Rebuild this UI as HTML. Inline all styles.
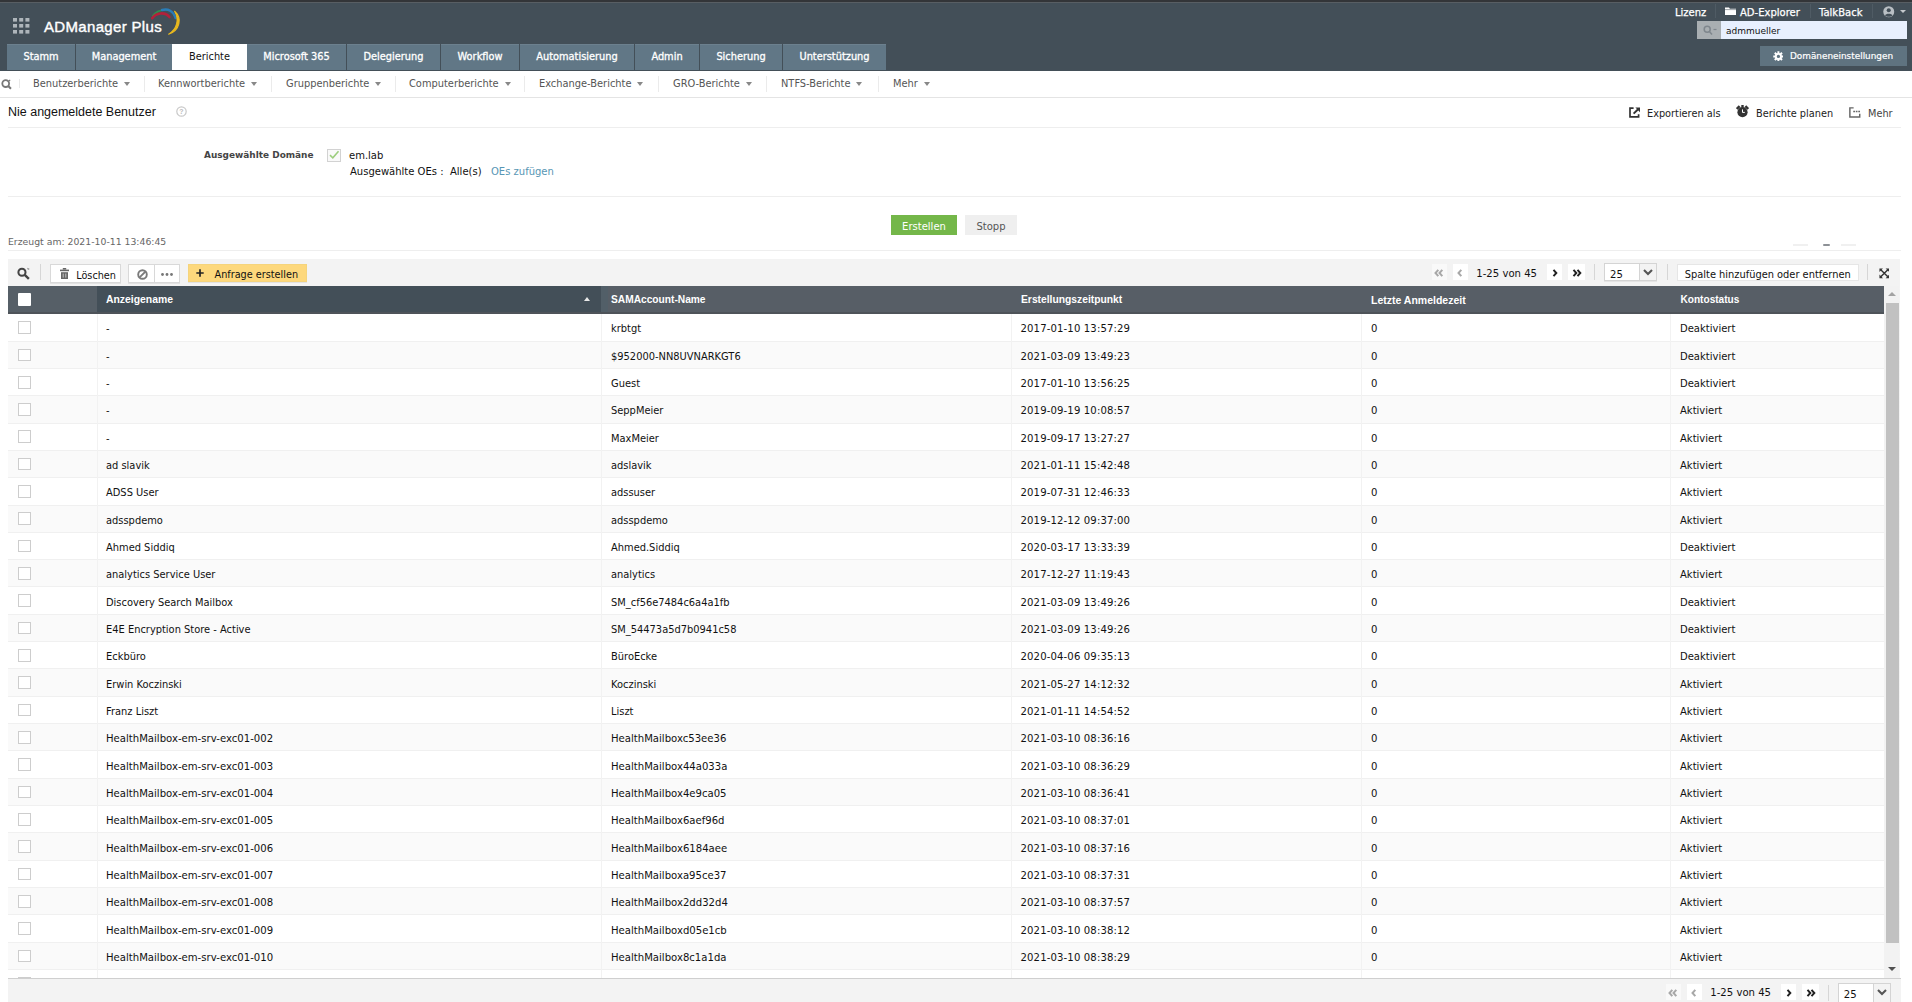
<!DOCTYPE html>
<html lang="de"><head><meta charset="utf-8"><title>ADManager Plus</title>
<style>
*{box-sizing:border-box;margin:0;padding:0}
html,body{width:1912px;height:1002px;overflow:hidden;background:#fff}
body{position:relative;font-family:"DejaVu Sans","Liberation Sans",sans-serif;font-size:10px;color:#111;line-height:12px}
i{font-style:normal;display:block;position:absolute}
#hdr{position:absolute;left:0;top:0;width:1912px;height:71px;background:#434f58}
#hdr .strip{position:absolute;left:0;top:0;width:1912px;height:3px;background:linear-gradient(#333538 2px,#585e63 2px)}
#logo{position:absolute;left:44px;top:17.3px;font-family:"Liberation Sans",sans-serif;font-size:15px;line-height:20px;color:#fff;white-space:nowrap;letter-spacing:0.33px;-webkit-text-stroke:0.4px #fff}
.tl{position:absolute;top:6.5px;color:#fff;font-size:10px;line-height:12px;white-space:nowrap;-webkit-text-stroke:0.25px #fff}
.tsep{position:absolute;top:4px;width:1px;height:14px;background:#4f5b64}
#srch{position:absolute;left:1697px;top:21px;width:210px;height:18px;background:#e8f0fe}
#srch .ic{position:absolute;left:0;top:0;width:24px;height:18px;background:#a9afb2}
#srch span{position:absolute;left:29px;top:4px;color:#111;font-size:9px}
#dom{position:absolute;left:1760px;top:46px;width:147px;height:20px;background:#5f7380;color:#fff;white-space:nowrap}
#dom span{position:absolute;left:30px;top:4px;font-size:8.9px;-webkit-text-stroke:0.2px #fff}
#tabs{position:absolute;left:0;top:44px;height:27px;width:900px}
.tab{position:absolute;top:0;height:26.2px;background:#617786;box-shadow:inset 0 1px 0 rgba(255,255,255,0.07);color:#fff;text-align:center;line-height:25.6px;font-size:9.8px;-webkit-text-stroke:0.3px #fff;white-space:nowrap}
.tab.act{background:#fff;color:#111;-webkit-text-stroke:0;box-shadow:none}
#sub{position:absolute;left:0;top:71px;width:1912px;height:27px;background:#fff;border-bottom:1px solid #e4e4e4}
.si{position:absolute;top:7.4px;color:#555;white-space:nowrap;font-size:9.85px}
.car{display:inline-block;position:relative;width:0;height:0;border-left:3.5px solid transparent;border-right:3.5px solid transparent;border-top:4px solid #888;margin-left:6px;top:-1px}
.ssep{top:5px;width:1px;height:16px;background:#ebebeb}
#title{position:absolute;left:8px;top:103.6px;font-family:"Liberation Sans",sans-serif;font-size:13.7px;line-height:16px;color:#111;white-space:nowrap;transform:scaleX(0.912);transform-origin:0 0}
.hl{position:absolute;left:8px;width:1893px;height:1px;background:#eee}
.act{white-space:nowrap}
.ra{position:absolute;top:107.5px;color:#222;white-space:nowrap;font-size:9.75px}
.lbl{position:absolute;white-space:nowrap}
#btnE{position:absolute;left:891px;top:215px;width:66px;height:20px;background:#74b749;color:#fff;text-align:center;line-height:23.6px}
#btnS{position:absolute;left:965px;top:215px;width:52px;height:20px;background:#efefef;color:#555;text-align:center;line-height:23.6px}
#tb{position:absolute;left:8px;top:258.4px;width:1892.4px;height:27.6px;background:linear-gradient(#fff 0.8px,#f3f3f3 0.8px)}
.btn{position:absolute;top:6px;height:19px;background:#fff;border:1px solid #d9d9d9;box-shadow:0 1px 0 #e2e2e2;white-space:nowrap;line-height:16px}
.vs{top:6px;width:1px;height:16px;background:#d6d6d6}
.pg{position:absolute;white-space:nowrap}
.pb{position:absolute;height:15.8px;background:#fff}
#tbl{position:absolute;left:8px;top:286px;width:1876px;height:692px;overflow:hidden}
#th{position:absolute;left:0;top:0;width:1876px;height:27.6px;background:linear-gradient(#575e66 26.4px,#4e5359 26.4px);color:#fff;font-family:"Liberation Sans",sans-serif;font-weight:bold;font-size:10.5px;z-index:3}
#th .sorted{position:absolute;left:89px;top:0;width:503.7px;height:26.4px;background:#434f58}
#th .sorted::after{content:"";position:absolute;left:100%;top:0;width:7.3px;height:100%;background:#525f68}
#th span{position:absolute;top:7.7px;white-space:nowrap}
#th .hc{position:absolute;left:0;top:0;width:89px;height:26.4px;background:#565f67}
.hcb{left:10px;top:7px;width:13px;height:13px;background:#fff;border-radius:1px}
.sortup{left:575.6px;top:11.3px;width:0;height:0;border-left:3.5px solid transparent;border-right:3.5px solid transparent;border-bottom:4px solid #e8e8e8}
.r{position:absolute;left:0;width:1876px;height:27.32px;background:#fff;border-bottom:1px solid #f0f0f0}
.r.alt{background:#fafafa}
.r b{position:absolute;top:9.2px;font-weight:normal;white-space:nowrap;font-size:10.1px}
.cb{left:10.2px;top:6.9px;width:12.7px;height:12.7px;border:1px solid #cdcdcd;background:#fff}
.n .c1,.n .c2{font-size:9.9px}
.c5{font-size:10px !important}
.c1{left:98px}.c2{left:603px}.c3{left:1012.5px;letter-spacing:0.13px}.c4{left:1363px}.c5{left:1672px}
.cl{top:28.3px;width:1px;height:670px;background:#f2f2f2;z-index:2}
#sb{position:absolute;left:1884px;top:286px;width:16.4px;height:692px;background:linear-gradient(90deg,#f2f2f2 15.4px,#f9f9f9)}
#sb .thumb{left:2.3px;top:17.4px;width:12.7px;height:640px;background:#c1c1c1}
#ft{position:absolute;left:8px;top:978px;width:1892.6px;height:24px;background:#f3f3f3;border-top:1px solid #cfcfcf}

</style></head><body>
<div id="hdr"><div class="strip"></div>
<svg style="position:absolute;left:13px;top:18px" width="17" height="16" viewBox="0 0 17 16"><g fill="#aeb5ba"><rect x="0" y="0" width="4" height="3.6"/><rect x="6.2" y="0" width="4" height="3.6"/><rect x="12.4" y="0" width="4" height="3.6"/><rect x="0" y="6" width="4" height="3.6"/><rect x="6.2" y="6" width="4" height="3.6"/><rect x="12.4" y="6" width="4" height="3.6"/><rect x="0" y="12" width="4" height="3.6"/><rect x="6.2" y="12" width="4" height="3.6"/><rect x="12.4" y="12" width="4" height="3.6"/></g></svg>
<div id="logo">ADManager Plus</div>
<svg style="position:absolute;left:150px;top:7px" width="34" height="30" viewBox="0 0 34 30" fill="none" stroke-linecap="round"><path d="M2.6 9 C6 4.5 11 2.6 17 2.9" stroke="#2f8f4e" stroke-width="1.6"/><path d="M12 3 C18 1.2 23.5 4 25.5 11" stroke="#2a7db8" stroke-width="2.4"/><path d="M2.2 11.2 C6 5.6 15 4.6 19.4 10" stroke="#b3213a" stroke-width="2.6"/><path d="M24.6 4.2 C32.5 11 30 23.5 18.6 27.2 C27 22 29.5 12.5 24.6 4.2Z" fill="#e9b91e" stroke="#e9b91e" stroke-width="1.1" stroke-linejoin="round"/></svg>
<span class="tl" style="left:1675px">Lizenz</span><i class="tsep" style="left:1715px"></i>
<svg style="position:absolute;left:1724.5px;top:6.5px" width="11" height="8.5" viewBox="0 0 11 8.5"><path d="M0 0.6 h4 l0.9 1.1 H11 V8.5 H0 Z" fill="#fff"/><path d="M0 2.6H11" stroke="#434f58" stroke-width="0.5"/></svg>
<span class="tl" style="left:1740px">AD-Explorer</span><i class="tsep" style="left:1810px"></i>
<span class="tl" style="left:1819px">TalkBack</span><i class="tsep" style="left:1872px"></i>
<svg style="position:absolute;left:1883px;top:6px" width="11.5" height="11.5" viewBox="0 0 13 13"><circle cx="6.5" cy="6.5" r="6.2" fill="#b9bfc4"/><circle cx="6.5" cy="4.8" r="2.3" fill="#434f58"/><path d="M2.3 10.6 C3 8 10 8 10.7 10.6 C9 12.6 4 12.6 2.3 10.6Z" fill="#434f58"/></svg>
<i style="left:1900px;top:10px;width:0;height:0;border-left:3px solid transparent;border-right:3px solid transparent;border-top:3.5px solid #c5cacd"></i>
<div id="srch"><div class="ic"><svg style="position:absolute;left:6px;top:4px" width="14" height="11" viewBox="0 0 14 11" fill="none" stroke="#7f878d" stroke-width="1.5"><circle cx="4.2" cy="4.2" r="3"/><path d="M6.4 6.4 L9 9.4"/><path d="M10.5 4.5 h3" stroke-width="1.2"/></svg></div><span>admmueller</span></div>
<div id="dom"><svg style="position:absolute;left:12.6px;top:4.6px" width="10.8" height="10.8" viewBox="0 0 12 12"><g fill="#fff"><circle cx="6" cy="6" r="3.9"/><g stroke="#fff" stroke-width="2.2"><path d="M6 0.3V11.7M0.3 6H11.7M2 2L10 10M10 2L2 10"/></g></g><circle cx="6" cy="6" r="1.8" fill="#5f7380"/></svg><span>Domäneneinstellungen</span></div>
</div>
<div id="tabs"><div class="tab" style="left:7px;width:68px">Stamm</div><div class="tab" style="left:76px;width:96px">Management</div><div class="tab act" style="left:172px;width:75px">Berichte</div><div class="tab" style="left:247px;width:99px">Microsoft 365</div><div class="tab" style="left:347px;width:93px">Delegierung</div><div class="tab" style="left:441px;width:78px">Workflow</div><div class="tab" style="left:520px;width:114px">Automatisierung</div><div class="tab" style="left:635px;width:64px">Admin</div><div class="tab" style="left:700px;width:82px">Sicherung</div><div class="tab" style="left:783px;width:103px">Unterstützung</div></div>
<div id="sub"><svg style="position:absolute;left:1.4px;top:7.6px" width="11" height="11" viewBox="0 0 11 11" fill="none" stroke="#777" stroke-width="1.8"><circle cx="4.7" cy="4.6" r="3.4"/><path d="M7.2 7 L10 9.8" stroke-width="2"/><path d="M7.6 2.2 L9.2 0.9" stroke-width="1.2"/></svg><i class="ssep" style="left:19px;top:8px;height:9px;background:#e9e9e9"></i>
<span class="si" style="left:33px">Benutzerberichte<i class="car"></i></span><i class="ssep" style="left:144px"></i><span class="si" style="left:158px">Kennwortberichte<i class="car"></i></span><i class="ssep" style="left:271px"></i><span class="si" style="left:286px">Gruppenberichte<i class="car"></i></span><i class="ssep" style="left:395px"></i><span class="si" style="left:409px">Computerberichte<i class="car"></i></span><i class="ssep" style="left:524px"></i><span class="si" style="left:539px">Exchange-Berichte<i class="car"></i></span><i class="ssep" style="left:658px"></i><span class="si" style="left:673px">GRO-Berichte<i class="car"></i></span><i class="ssep" style="left:766px"></i><span class="si" style="left:781px">NTFS-Berichte<i class="car"></i></span><i class="ssep" style="left:878px"></i><span class="si" style="left:893px">Mehr<i class="car"></i></span></div>
<div id="title">Nie angemeldete Benutzer</div>
<svg style="position:absolute;left:176px;top:106px" width="11" height="11" viewBox="0 0 11 11"><circle cx="5.5" cy="5.5" r="4.7" fill="none" stroke="#c9c9c9" stroke-width="1.2"/><text x="5.5" y="8.2" font-size="7" text-anchor="middle" fill="#bbb" font-family="Liberation Sans,sans-serif" font-weight="bold">?</text></svg>
<svg style="position:absolute;left:1628.6px;top:107px" width="12" height="11" viewBox="0 0 12 11" fill="none" stroke="#333" stroke-width="1.7"><path d="M4.6 1.2H1V9.9H9.6V7.2"/><path d="M4.6 6.6 L9.4 2" stroke-width="2"/><path d="M6.4 0.6H11V5.2Z" fill="#333" stroke="none"/></svg>
<span class="ra" style="left:1647px">Exportieren als</span>
<svg style="position:absolute;left:1736px;top:105.4px" width="13" height="13" viewBox="0 0 13 13"><circle cx="6.5" cy="7.2" r="5.1" fill="#333"/><path d="M0.8 4 L3.6 1.2 M12.2 4 L9.4 1.2" stroke="#333" stroke-width="2.4"/><rect x="5.3" y="0" width="2.4" height="2.4" fill="#333"/><path d="M6.5 4.4V7.4H8.8" stroke="#fff" stroke-width="1" fill="none"/></svg>
<span class="ra" style="left:1756px">Berichte planen</span>
<svg style="position:absolute;left:1849.2px;top:107.4px" width="11.6" height="10.8" viewBox="0 0 12 11" fill="none" stroke="#666" stroke-width="1.5"><path d="M4.8 0.8H0.9V10.2H11.1V7"/><path d="M4.4 4.6H11.4" stroke-width="1.7" stroke-dasharray="1.8 0.8"/></svg>
<span class="ra" style="left:1868px;color:#444">Mehr</span>
<div class="hl" style="top:127px"></div>
<span class="lbl" style="left:204px;top:149px;font-family:'DejaVu Sans',sans-serif;font-weight:bold;font-size:8.95px;color:#444">Ausgewählte Domäne</span>
<i style="left:327.3px;top:148.8px;width:13.6px;height:12.8px;border:1px solid #d2d2d2;background:#f9f9f9"></i>
<svg style="position:absolute;left:329px;top:150.4px" width="10.5" height="9.5" viewBox="0 0 11 10" fill="none" stroke="#9ccd7d" stroke-width="1.6"><path d="M1 5.4 L4 8.2 L10 1.2"/></svg>
<span class="lbl" style="left:349px;top:150px">em.lab</span>
<span class="lbl" style="left:350px;top:166px">Ausgewählte OEs :</span>
<span class="lbl" style="left:450px;top:166px">Alle(s)</span>
<span class="lbl" style="left:491px;top:166px;color:#5796b4">OEs zufügen</span>
<div class="hl" style="top:196px"></div>
<div id="btnE">Erstellen</div><div id="btnS">Stopp</div>
<span class="lbl" style="left:8px;top:236px;font-size:9.3px;color:#666">Erzeugt am: 2021-10-11 13:46:45</span>
<div class="hl" style="top:250px"></div>
<i style="left:1793px;top:244px;width:15px;height:2px;background:#f0f0f0"></i><i style="left:1823px;top:244.1px;width:7px;height:1.6px;background:#8d9196;border-radius:1px"></i><i style="left:1841px;top:244px;width:15px;height:2px;background:#f0f0f0"></i>
<div id="tb">
<svg style="position:absolute;left:8.5px;top:8.5px" width="14" height="13" viewBox="0 0 13 12" fill="none" stroke="#444" stroke-width="1.9"><circle cx="4.6" cy="4.8" r="3.3"/><path d="M7.2 7.3 L11 11" stroke-width="2.2"/><path d="M9.6 1.2 L11.4 2.2" stroke-width="1.2" stroke="#999"/></svg>
<i class="vs" style="left:32px"></i>
<div class="btn" style="left:42px;width:71px"><svg style="position:absolute;left:9px;top:3px" width="9" height="11" viewBox="0 0 9 11"><g fill="#666"><rect x="0" y="1.6" width="9" height="1.6"/><rect x="2.8" y="0" width="3.4" height="1.6"/><path d="M1 4.2H8V11H1Z"/></g><path d="M3.2 5.6V9.6M5.8 5.6V9.6" stroke="#ddd" stroke-width="0.8"/></svg><span style="position:absolute;left:25.2px;top:2.5px;font-size:9.7px">Löschen</span></div>
<div class="btn" style="left:120px;width:52px"><svg style="position:absolute;left:8px;top:3.4px" width="11" height="11" viewBox="0 0 11 11" fill="none" stroke="#7a7a7a" stroke-width="1.9"><circle cx="5.5" cy="5.5" r="4.3"/><path d="M2.6 8.4L8.4 2.6"/></svg><i style="left:25px;top:0;width:1px;height:17px;background:#d8d8d8"></i><svg style="position:absolute;left:32px;top:7.5px" width="12" height="3" viewBox="0 0 12 3"><g fill="#777"><circle cx="1.5" cy="1.5" r="1.4"/><circle cx="6" cy="1.5" r="1.4"/><circle cx="10.5" cy="1.5" r="1.4"/></g></svg></div>
<div class="btn" style="left:180px;width:119px;background:#fdd87c;border-color:#f5d47c;height:18px"><svg style="position:absolute;left:7px;top:4px" width="8" height="8" viewBox="0 0 8 8"><path d="M4 0.3V7.7M0.3 4H7.7" stroke="#222" stroke-width="1.7"/></svg><span style="position:absolute;left:25.5px;top:1.5px;font-size:9.7px">Anfrage erstellen</span></div>
<i class="pb" style="left:1423.6px;top:6.1px;width:15px;background:#f9f9f9"></i><svg style="position:absolute;left:1425.6px;top:10.3px" width="11" height="8" viewBox="0 0 11 8" fill="none" stroke="#a8a8a8" stroke-width="2"><path d="M4.3 0.9 L1.5 4 L4.3 7.1 M8.3 0.9 L5.5 4 L8.3 7.1"/></svg><i class="pb" style="left:1444.7px;top:6.1px;width:15px"></i><svg style="position:absolute;left:1449.2px;top:10.3px" width="6" height="8" viewBox="0 0 6 8" fill="none" stroke="#a8a8a8" stroke-width="2"><path d="M4.3 0.9 L1.5 4 L4.3 7.1"/></svg><span class="pg" style="left:1468.3px;top:9.5px;font-size:10.1px">1-25 von 45</span><i class="pb" style="left:1539.2px;top:6.1px;width:15px"></i><svg style="position:absolute;left:1544.2px;top:10.3px" width="6" height="8" viewBox="0 0 6 8" fill="none" stroke="#222" stroke-width="2"><path d="M1.5 0.9 L4.3 4 L1.5 7.1"/></svg><i class="pb" style="left:1560.3px;top:6.1px;width:16.3px"></i><svg style="position:absolute;left:1563.8px;top:10.3px" width="11" height="8" viewBox="0 0 11 8" fill="none" stroke="#222" stroke-width="2"><path d="M1.5 0.9 L4.3 4 L1.5 7.1 M5.5 0.9 L8.3 4 L5.5 7.1"/></svg>
<i class="vs" style="left:1586px"></i>
<div style="position:absolute;left:1596.4px;top:5px;width:53px;height:18px;background:#fff;border:1px solid #d4d4d4;box-shadow:0 1px 0 #e4e4e4"><span style="position:absolute;left:4.6px;top:4.3px;font-size:10.1px">25</span><i style="left:33.4px;top:0;width:17.6px;height:16px;background:#f3f3f3;border-left:1px solid #d4d4d4"></i><svg style="position:absolute;left:38px;top:4.6px" width="10" height="7" viewBox="0 0 10 7" fill="none" stroke="#555" stroke-width="2.1"><path d="M1 1 L5 5 L9 1"/></svg></div>
<i class="vs" style="left:1659px"></i>
<div class="btn" style="left:1668.5px;top:6px;width:182.5px;height:17px;border-color:#e6e6e6;box-shadow:none"><span style="position:absolute;left:7.3px;top:1.2px;font-size:9.85px">Spalte hinzufügen oder entfernen</span></div>
<i class="vs" style="left:1859px"></i>
<svg style="position:absolute;left:1870.8px;top:9.8px" width="10.6" height="10.6" viewBox="0 0 12 12" fill="#333" stroke="#333"><path d="M2 2 L10 10 M10 2 L2 10" stroke-width="1.6"/><path d="M0.5 0.5H4.5L0.5 4.5Z M11.5 0.5H7.5L11.5 4.5Z M0.5 11.5H4.5L0.5 7.5Z M11.5 11.5H7.5L11.5 7.5Z" stroke="none"/></svg>
</div>
<div id="tbl"><div id="th"><div class="hc"><i class="hcb"></i></div><div class="sorted"></div><span style="left:98px;font-size:10.4px">Anzeigename</span><i class="sortup"></i><span style="left:603px;font-size:10.2px">SAMAccount-Name</span><span style="left:1013px;font-size:10.3px">Erstellungszeitpunkt</span><span style="left:1363px">Letzte Anmeldezeit</span><span style="left:1672.5px;font-size:10.1px">Kontostatus</span></div>
<div class="r n" style="top:28.30px"><i class="cb"></i><b class="c1">-</b><b class="c2">krbtgt</b><b class="c3">2017-01-10 13:57:29</b><b class="c4">0</b><b class="c5">Deaktiviert</b></div>
<div class="r alt n" style="top:55.62px"><i class="cb"></i><b class="c1">-</b><b class="c2">$952000-NN8UVNARKGT6</b><b class="c3">2021-03-09 13:49:23</b><b class="c4">0</b><b class="c5">Deaktiviert</b></div>
<div class="r n" style="top:82.94px"><i class="cb"></i><b class="c1">-</b><b class="c2">Guest</b><b class="c3">2017-01-10 13:56:25</b><b class="c4">0</b><b class="c5">Deaktiviert</b></div>
<div class="r alt n" style="top:110.26px"><i class="cb"></i><b class="c1">-</b><b class="c2">SeppMeier</b><b class="c3">2019-09-19 10:08:57</b><b class="c4">0</b><b class="c5">Aktiviert</b></div>
<div class="r n" style="top:137.58px"><i class="cb"></i><b class="c1">-</b><b class="c2">MaxMeier</b><b class="c3">2019-09-17 13:27:27</b><b class="c4">0</b><b class="c5">Aktiviert</b></div>
<div class="r alt n" style="top:164.90px"><i class="cb"></i><b class="c1">ad slavik</b><b class="c2">adslavik</b><b class="c3">2021-01-11 15:42:48</b><b class="c4">0</b><b class="c5">Aktiviert</b></div>
<div class="r n" style="top:192.22px"><i class="cb"></i><b class="c1">ADSS User</b><b class="c2">adssuser</b><b class="c3">2019-07-31 12:46:33</b><b class="c4">0</b><b class="c5">Aktiviert</b></div>
<div class="r alt n" style="top:219.54px"><i class="cb"></i><b class="c1">adsspdemo</b><b class="c2">adsspdemo</b><b class="c3">2019-12-12 09:37:00</b><b class="c4">0</b><b class="c5">Aktiviert</b></div>
<div class="r n" style="top:246.86px"><i class="cb"></i><b class="c1">Ahmed Siddiq</b><b class="c2">Ahmed.Siddiq</b><b class="c3">2020-03-17 13:33:39</b><b class="c4">0</b><b class="c5">Deaktiviert</b></div>
<div class="r alt n" style="top:274.18px"><i class="cb"></i><b class="c1">analytics Service User</b><b class="c2">analytics</b><b class="c3">2017-12-27 11:19:43</b><b class="c4">0</b><b class="c5">Aktiviert</b></div>
<div class="r n" style="top:301.50px"><i class="cb"></i><b class="c1">Discovery Search Mailbox</b><b class="c2">SM_cf56e7484c6a4a1fb</b><b class="c3">2021-03-09 13:49:26</b><b class="c4">0</b><b class="c5">Deaktiviert</b></div>
<div class="r alt n" style="top:328.82px"><i class="cb"></i><b class="c1">E4E Encryption Store - Active</b><b class="c2">SM_54473a5d7b0941c58</b><b class="c3">2021-03-09 13:49:26</b><b class="c4">0</b><b class="c5">Deaktiviert</b></div>
<div class="r n" style="top:356.14px"><i class="cb"></i><b class="c1">Eckbüro</b><b class="c2">BüroEcke</b><b class="c3">2020-04-06 09:35:13</b><b class="c4">0</b><b class="c5">Deaktiviert</b></div>
<div class="r alt n" style="top:383.46px"><i class="cb"></i><b class="c1">Erwin Koczinski</b><b class="c2">Koczinski</b><b class="c3">2021-05-27 14:12:32</b><b class="c4">0</b><b class="c5">Aktiviert</b></div>
<div class="r n" style="top:410.78px"><i class="cb"></i><b class="c1">Franz Liszt</b><b class="c2">Liszt</b><b class="c3">2021-01-11 14:54:52</b><b class="c4">0</b><b class="c5">Aktiviert</b></div>
<div class="r alt" style="top:438.10px"><i class="cb"></i><b class="c1">HealthMailbox-em-srv-exc01-002</b><b class="c2">HealthMailboxc53ee36</b><b class="c3">2021-03-10 08:36:16</b><b class="c4">0</b><b class="c5">Aktiviert</b></div>
<div class="r" style="top:465.42px"><i class="cb"></i><b class="c1">HealthMailbox-em-srv-exc01-003</b><b class="c2">HealthMailbox44a033a</b><b class="c3">2021-03-10 08:36:29</b><b class="c4">0</b><b class="c5">Aktiviert</b></div>
<div class="r alt" style="top:492.74px"><i class="cb"></i><b class="c1">HealthMailbox-em-srv-exc01-004</b><b class="c2">HealthMailbox4e9ca05</b><b class="c3">2021-03-10 08:36:41</b><b class="c4">0</b><b class="c5">Aktiviert</b></div>
<div class="r" style="top:520.06px"><i class="cb"></i><b class="c1">HealthMailbox-em-srv-exc01-005</b><b class="c2">HealthMailbox6aef96d</b><b class="c3">2021-03-10 08:37:01</b><b class="c4">0</b><b class="c5">Aktiviert</b></div>
<div class="r alt" style="top:547.38px"><i class="cb"></i><b class="c1">HealthMailbox-em-srv-exc01-006</b><b class="c2">HealthMailbox6184aee</b><b class="c3">2021-03-10 08:37:16</b><b class="c4">0</b><b class="c5">Aktiviert</b></div>
<div class="r" style="top:574.70px"><i class="cb"></i><b class="c1">HealthMailbox-em-srv-exc01-007</b><b class="c2">HealthMailboxa95ce37</b><b class="c3">2021-03-10 08:37:31</b><b class="c4">0</b><b class="c5">Aktiviert</b></div>
<div class="r alt" style="top:602.02px"><i class="cb"></i><b class="c1">HealthMailbox-em-srv-exc01-008</b><b class="c2">HealthMailbox2dd32d4</b><b class="c3">2021-03-10 08:37:57</b><b class="c4">0</b><b class="c5">Aktiviert</b></div>
<div class="r" style="top:629.34px"><i class="cb"></i><b class="c1">HealthMailbox-em-srv-exc01-009</b><b class="c2">HealthMailboxd05e1cb</b><b class="c3">2021-03-10 08:38:12</b><b class="c4">0</b><b class="c5">Aktiviert</b></div>
<div class="r alt" style="top:656.66px"><i class="cb"></i><b class="c1">HealthMailbox-em-srv-exc01-010</b><b class="c2">HealthMailbox8c1a1da</b><b class="c3">2021-03-10 08:38:29</b><b class="c4">0</b><b class="c5">Aktiviert</b></div>
<div class="r" style="top:683.98px"><i class="cb"></i><b class="c1"></b><b class="c2"></b><b class="c3"></b><b class="c4"></b><b class="c5"></b></div>
<i class="cl" style="left:89px"></i><i class="cl" style="left:593px"></i><i class="cl" style="left:1003px"></i><i class="cl" style="left:1353px"></i><i class="cl" style="left:1662px"></i></div>
<div id="sb"><i style="left:4px;top:6px;width:0;height:0;border-left:4px solid transparent;border-right:4px solid transparent;border-bottom:4px solid #a3a3a3"></i><i class="thumb"></i><i style="left:4px;top:681px;width:0;height:0;border-left:4px solid transparent;border-right:4px solid transparent;border-top:4px solid #505050"></i></div>
<div id="ft">
<i class="pb" style="left:1657.6px;top:5.4px;width:15px;background:#f9f9f9"></i><svg style="position:absolute;left:1659.6px;top:9.6px" width="11" height="8" viewBox="0 0 11 8" fill="none" stroke="#a8a8a8" stroke-width="2"><path d="M4.3 0.9 L1.5 4 L4.3 7.1 M8.3 0.9 L5.5 4 L8.3 7.1"/></svg><i class="pb" style="left:1678.7px;top:5.4px;width:15px"></i><svg style="position:absolute;left:1683.2px;top:9.6px" width="6" height="8" viewBox="0 0 6 8" fill="none" stroke="#a8a8a8" stroke-width="2"><path d="M4.3 0.9 L1.5 4 L4.3 7.1"/></svg><span class="pg" style="left:1702.3px;top:8.4px;font-size:10.1px">1-25 von 45</span><i class="pb" style="left:1773.2px;top:5.4px;width:15px"></i><svg style="position:absolute;left:1778.2px;top:9.6px" width="6" height="8" viewBox="0 0 6 8" fill="none" stroke="#222" stroke-width="2"><path d="M1.5 0.9 L4.3 4 L1.5 7.1"/></svg><i class="pb" style="left:1794.3px;top:5.4px;width:16.3px"></i><svg style="position:absolute;left:1797.8px;top:9.6px" width="11" height="8" viewBox="0 0 11 8" fill="none" stroke="#222" stroke-width="2"><path d="M1.5 0.9 L4.3 4 L1.5 7.1 M5.5 0.9 L8.3 4 L5.5 7.1"/></svg>
<i class="vs" style="left:1820px"></i>
<div style="position:absolute;left:1830.2px;top:3.7px;width:53px;height:21px;background:#fff;border:1px solid #d4d4d4"><span style="position:absolute;left:4.6px;top:5.6px;font-size:10.1px">25</span><i style="left:33.4px;top:0;width:17.6px;height:18px;background:#f3f3f3;border-left:1px solid #d4d4d4"></i><svg style="position:absolute;left:38px;top:5.3px" width="10" height="7" viewBox="0 0 10 7" fill="none" stroke="#555" stroke-width="2.1"><path d="M1 1 L5 5 L9 1"/></svg></div>
</div>
</body></html>
